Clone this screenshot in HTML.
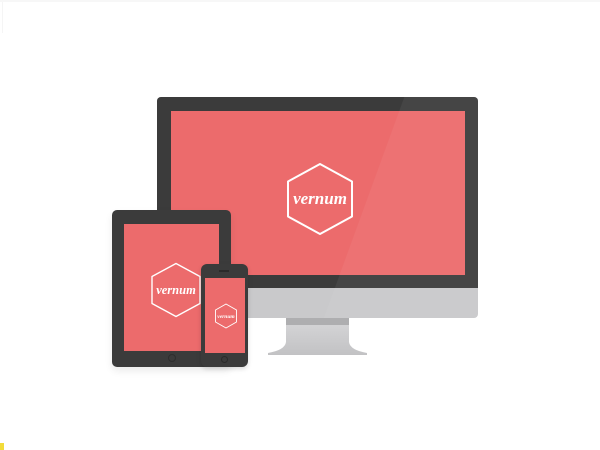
<!DOCTYPE html>
<html><head><style>
body{margin:0;width:600px;height:450px;background:#fff;position:relative;overflow:hidden;font-family:"Liberation Sans",sans-serif}
.a{position:absolute}
.hx text{font-family:"Liberation Serif",serif;font-style:italic;font-weight:bold;fill:#fff}
</style></head><body>
<div class="a" style="left:0;top:0;width:600px;height:2px;background:#f7f7f7"></div>
<div class="a" style="left:2px;top:2px;width:1px;height:31px;background:#f5f5f5"></div>
<div class="a" style="left:0;top:443px;width:4px;height:7px;background:#f2dc3a"></div>

<!-- monitor stand -->
<svg class="a" style="left:266px;top:316px" width="104" height="42">
<defs><linearGradient id="g" x1="0" y1="0" x2="0" y2="1"><stop offset="0" stop-color="#d8d8da"/><stop offset="1" stop-color="#c2c2c4"/></linearGradient></defs>
<path d="M20 0 H83 V26 Q84 34 101 37 V39 H2 V37 Q19 34 20 26 Z" fill="url(#g)"/>
<rect x="20" y="2" width="63" height="7" fill="#aeaeb0"/>
</svg>
<!-- monitor -->
<div class="a" style="left:157px;top:97px;width:321px;height:221px;background:#c9c9cb;border-radius:4px;overflow:hidden">
 <div class="a" style="left:0;top:0;width:321px;height:191px;background:#3b3b3b"></div>
 <div class="a" style="left:14px;top:14px;width:294px;height:164px;background:#ec6b6c"></div>
 <div class="a" style="left:200px;top:-20px;width:200px;height:300px;background:rgba(255,255,255,.05);transform:skewX(-20deg)"></div>
</div>
<svg class="a hx" style="left:286px;top:162px" width="68" height="74">
<polygon points="34,2 66,19.5 66,54.5 34,72 2,54.5 2,19.5" fill="none" stroke="#fff" stroke-width="2" stroke-linejoin="round"/>
<text x="34" y="42" font-size="17" text-anchor="middle">vernum</text>
</svg>

<!-- tablet -->
<div class="a" style="left:112px;top:210px;width:119px;height:157px;background:#3b3b3b;border-radius:5px;box-shadow:0 4px 8px rgba(0,0,0,.08)">
 <div class="a" style="left:12px;top:14px;width:95px;height:127px;background:#ec6b6c"></div>
 <div class="a" style="left:56px;top:144px;width:6px;height:6px;border:1px solid #2e2e2e;border-radius:50%"></div>
</div>
<svg class="a hx" style="left:150px;top:262px" width="52" height="56">
<polygon points="26,1.5 50,14.5 50,41.5 26,54.5 2,41.5 2,14.5" fill="none" stroke="#fff" stroke-width="1.4" stroke-linejoin="round"/>
<text x="26" y="32" font-size="12.5" text-anchor="middle">vernum</text>
</svg>

<!-- phone -->
<div class="a" style="left:201px;top:264px;width:47px;height:103px;background:#3b3b3b;border-radius:6px;box-shadow:0 2px 5px rgba(0,0,0,.15)">
 <div class="a" style="left:4px;top:14px;width:40px;height:75px;background:#ec6b6c"></div>
 <div class="a" style="left:18px;top:6px;width:10px;height:1.5px;background:#2a2a2a"></div>
 <div class="a" style="left:20px;top:92px;width:5px;height:5px;border:1px solid #2a2a2a;border-radius:50%"></div>
</div>
<svg class="a hx" style="left:214px;top:303px" width="24" height="26">
<polygon points="12,1 22.5,7 22.5,19 12,25 1.5,19 1.5,7" fill="none" stroke="#fff" stroke-width="0.9" stroke-linejoin="round"/>
<text x="12" y="15" font-size="5.5" text-anchor="middle">vernum</text>
</svg>
</body></html>
